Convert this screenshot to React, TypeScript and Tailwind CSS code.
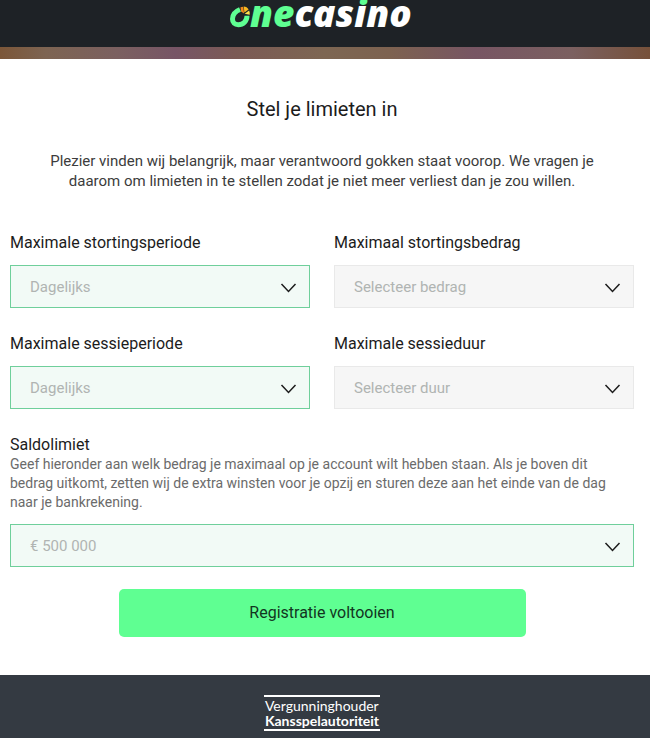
import type { ReactNode } from "react";
import { useId } from "react";

type LimitSelectProps = {
  label: string;
  options: string[];
  active?: boolean;
  children?: ReactNode;
};

const Logo = () => {
  return (
    <svg className="h-[47px] w-[190px]" viewBox="0 0 190 47" role="img" aria-label="onecasino">
      <defs>
        {/* only the dot of the "i" reaches the green part */}
        <linearGradient id="dot" gradientUnits="userSpaceOnUse" x1="0" y1="0" x2="0" y2="47">
          <stop offset="0.1" stopColor="#5fff92" />
          <stop offset="0.1" stopColor="#ffffff" />
        </linearGradient>
      </defs>
      {/* roulette shaped "o" */}
      <path
        d="M12 9.500C7 11.500 4.500 15.500 4.500 19c0 3.800 2.300 5.700 5.800 5.700 5 0 8.700-3.700 8.700-8.900"
        fill="none"
        stroke="#5fff92"
        strokeWidth="5"
      />
      <path d="M12.500 7.300l2.700-.6.900 6.900-3.100-2.200z" fill="#f08a1d" />
      <path d="M15.700 6.600c2.200.1 3.800 1.100 4.900 2.800l-4.200 3.200z" fill="#f9b81f" />
      <path d="M16.700 13.800l4.400-3.400c.6 1.400.8 2.700.6 4.300z" fill="#ffe14a" />
      <text x="22" y="27" fontFamily="Open Sans, sans-serif" fontSize="37" fontWeight="800" fontStyle="italic">
        <tspan fill="#5fff92">ne</tspan>
        <tspan fill="url(#dot)">casino</tspan>
      </text>
    </svg>
  );
};

const LimitSelect = ({ label, options, active, children }: LimitSelectProps) => {
  const id = useId();

  return (
    <div>
      <label htmlFor={id} className="block text-base leading-5 text-[#1c1c1c]">
        {label}
      </label>
      {children}
      <div className="relative mt-3">
        <select
          id={id}
          className={`block h-[43px] w-full appearance-none border px-[19px] pt-[2px] text-[15px] text-[#b0b4b2] outline-none ${
            active ? "border-[#6fcf9b] bg-[#f2faf6]" : "border-[#e9e9e9] bg-[#f6f6f6]"
          }`}
        >
          {options.map((option) => (
            <option key={option}>{option}</option>
          ))}
        </select>
        <svg
          className="pointer-events-none absolute top-[18px] right-[13px] h-[10px] w-[17px]"
          viewBox="0 0 17 10"
          fill="none"
          stroke="#1c1c1c"
          strokeWidth="1.500"
        >
          <path d="M1.500 1l7 7.500 7-7.500" />
        </svg>
      </div>
    </div>
  );
};

const App = () => {
  return (
    <div className="flex min-h-screen flex-col bg-white font-['Roboto',sans-serif]">
      <header className="flex h-[47px] justify-center bg-[#1e2226] pr-1">
        <Logo />
      </header>
      <div className="h-3 bg-[linear-gradient(90deg,#7b5638_0%,#7d6452_7%,#7b6060_18%,#775566_27%,#7b5a55_36%,#7d6652_50%,#7d6250_60%,#775563_73%,#7b6060_88%,#76513a_100%)]" />

      <main className="pr-4 pl-[10px]">
        <h1 className="pt-9 text-center text-xl leading-7 text-[#1c1c1c]">Stel je limieten in</h1>
        <p className="mx-auto mt-7 max-w-[570px] text-center text-[15px] leading-5 text-[#3c3c3c]">
          Plezier vinden wij belangrijk, maar verantwoord gokken staat voorop. We vragen je daarom om limieten in te
          stellen zodat je niet meer verliest dan je zou willen.
        </p>

        <form className="pt-[42px]">
          <div className="grid grid-cols-2 gap-x-6 gap-y-[26px]">
            <LimitSelect label="Maximale stortingsperiode" options={["Dagelijks", "Wekelijks", "Maandelijks"]} active />
            <LimitSelect label="Maximaal stortingsbedrag" options={["Selecteer bedrag"]} />
            <LimitSelect label="Maximale sessieperiode" options={["Dagelijks", "Wekelijks", "Maandelijks"]} active />
            <LimitSelect label="Maximale sessieduur" options={["Selecteer duur"]} />
            <div className="col-span-2">
              <LimitSelect label="Saldolimiet" options={["€ 500 000"]} active>
                <p className="text-sm leading-[19px] text-[#6b6b6b]">
                  Geef hieronder aan welk bedrag je maximaal op je account wilt hebben staan. Als je boven dit bedrag
                  uitkomt, zetten wij de extra winsten voor je opzij en sturen deze aan het einde van de dag naar je
                  bankrekening.
                </p>
              </LimitSelect>
            </div>
          </div>
          <button
            type="button"
            className="mx-auto mt-[22px] mb-[38px] block h-12 w-[407px] max-w-full rounded-[5px] bg-[#5fff92] text-base text-[#12351f]"
          >
            Registratie voltooien
          </button>
        </form>
      </main>

      <footer className="flex flex-1 justify-center bg-[#343a42] pt-5 pr-[6px] pb-[6px]">
        <p className="h-9 border-y-2 border-white px-px pt-px font-['Lato',sans-serif] text-sm leading-[15px] text-white">
          <span className="block">Vergunninghouder</span>
          <span className="block font-bold">Kansspelautoriteit</span>
        </p>
      </footer>
    </div>
  );
};

export default App;
